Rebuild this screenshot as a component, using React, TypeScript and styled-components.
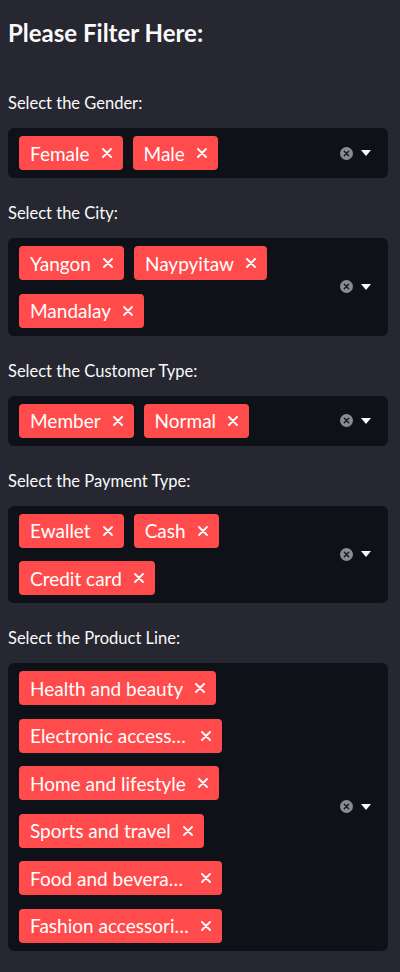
import React from 'react'
import styled, { createGlobalStyle } from 'styled-components'

const GlobalStyle = createGlobalStyle`
  html, body {
    margin: 0;
    padding: 0;
    background: #262730;
  }
  body {
    font-family: "Lato", "Open Sans", sans-serif;
    color: #fafafa;
  }
`

type Filter = { label: string; options: string[] }

const filters: Filter[] = [
  { label: 'Select the Gender:', options: ['Female', 'Male'] },
  { label: 'Select the City:', options: ['Yangon', 'Naypyitaw', 'Mandalay'] },
  { label: 'Select the Customer Type:', options: ['Member', 'Normal'] },
  { label: 'Select the Payment Type:', options: ['Ewallet', 'Cash', 'Credit card'] },
  {
    label: 'Select the Product Line:',
    options: [
      'Health and beauty',
      'Electronic accessories',
      'Home and lifestyle',
      'Sports and travel',
      'Food and beverages',
      'Fashion accessories',
    ],
  },
]

export default function App() {
  return (
    <>
      <GlobalStyle />
      <Sidebar>
        <Heading>Please Filter Here:</Heading>
        {filters.map((f) => (
          <Section key={f.label}>
            <Label>{f.label}</Label>
            <Box>
              <Tags>
                {f.options.map((o) => (
                  <Tag key={o} title={o}>
                    <TagText>{o}</TagText>
                    <CloseIcon />
                  </Tag>
                ))}
              </Tags>
              <Controls>
                <ClearIcon />
                <Caret />
              </Controls>
            </Box>
          </Section>
        ))}
      </Sidebar>
    </>
  )
}

function CloseIcon() {
  return (
    <svg width="10" height="10" viewBox="0 0 10 10">
      <path d="M1 1 L9 9 M9 1 L1 9" stroke="#fff" strokeWidth="1.8" strokeLinecap="round" />
    </svg>
  )
}

function ClearIcon() {
  return (
    <svg width="13" height="13" viewBox="0 0 13 13">
      <circle cx="6.5" cy="6.5" r="6.5" fill="#8a8b94" />
      <path d="M4.3 4.3 L8.7 8.7 M8.7 4.3 L4.3 8.7" stroke="#1b1c22" strokeWidth="1.5" strokeLinecap="round" />
    </svg>
  )
}

function Caret() {
  return (
    <svg width="10" height="6" viewBox="0 0 10 6">
      <path d="M0 0 H10 L5 6 Z" fill="#fafafa" />
    </svg>
  )
}

const Sidebar = styled.div`
  padding: 17px 12px 20px 8px;
  display: flex;
  flex-direction: column;
`

const Heading = styled.h3`
  margin: 0 0 44px 0;
  font-size: 24px;
  line-height: 32px;
  font-weight: 700;
  color: #fafafa;
`

const Section = styled.div`
  display: flex;
  flex-direction: column;
  margin-bottom: 25px;
`

const Label = styled.label`
  font-size: 16.5px;
  line-height: 20px;
  margin-bottom: 15px;
  color: #fafafa;
`

const Box = styled.div`
  display: flex;
  align-items: center;
  background: #0e1117;
  border-radius: 6px;
  padding: 8px 17px 8px 11px;
  min-height: 34px;
`

const Tags = styled.div`
  flex: 1;
  display: flex;
  flex-wrap: wrap;
  column-gap: 10px;
  row-gap: 13.5px;
`

const Tag = styled.span`
  display: inline-flex;
  align-items: center;
  height: 34px;
  padding: 0 11px;
  gap: 12px;
  background: #ff4b4b;
  border-radius: 4px;
  color: #fff;
  font-size: 19px;
`

const TagText = styled.span`
  max-width: 159px;
  white-space: nowrap;
  overflow: hidden;
  text-overflow: ellipsis;
`

const Controls = styled.div`
  display: flex;
  align-items: center;
  gap: 8px;
`
